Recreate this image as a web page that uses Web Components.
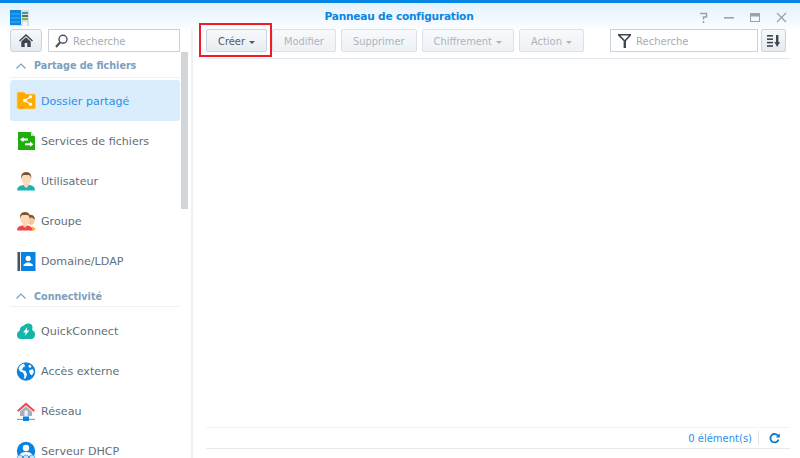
<!DOCTYPE html>
<html lang="fr">
<head>
<meta charset="utf-8">
<title>Panneau de configuration</title>
<style>
    html, body { margin: 0; height: 100%; overflow: hidden; background: #fff; }
    body { font-family: "DejaVu Sans", Verdana, sans-serif; }
</style>
</head>
<body>

<dsm-window>
    <dsm-titlebar slot="title">Panneau de configuration</dsm-titlebar>
    <dsm-sidebar slot="side">
        <nav-group>Partage de fichiers</nav-group>
        <nav-item icon="folder" active>Dossier partagé</nav-item>
        <nav-item icon="services">Services de fichiers</nav-item>
        <nav-item icon="user">Utilisateur</nav-item>
        <nav-item icon="group">Groupe</nav-item>
        <nav-item icon="domain">Domaine/LDAP</nav-item>
        <nav-group>Connectivité</nav-group>
        <nav-item icon="quick">QuickConnect</nav-item>
        <nav-item icon="globe">Accès externe</nav-item>
        <nav-item icon="network">Réseau</nav-item>
        <nav-item icon="dhcp">Serveur DHCP</nav-item>
    </dsm-sidebar>
    <dsm-main slot="main">
        <tool-button slot="tools" menu highlight>Créer</tool-button>
        <tool-button slot="tools" disabled>Modifier</tool-button>
        <tool-button slot="tools" disabled>Supprimer</tool-button>
        <tool-button slot="tools" menu disabled>Chiffrement</tool-button>
        <tool-button slot="tools" menu disabled>Action</tool-button>
        <span slot="status">0 élément(s)</span>
    </dsm-main>
</dsm-window>

<script>
const icons = {
    folder: `<path d="M1 3.5 Q1 2 2.5 2 H8 L10 4 H18 Q19.5 4 19.5 5.5 V17.5 Q19.5 19 18 19 H2.5 Q1 19 1 17.5 Z" fill="#ffab00" stroke="#ffd27a" stroke-width=".7"/>
        <path d="M14.5 6.8 L8.8 10.5 L14.5 14.2" fill="none" stroke="#fff" stroke-width="1.2"/>
        <circle cx="14.5" cy="6.8" r="1.6" fill="#fff"/><circle cx="8.8" cy="10.5" r="1.7" fill="#fff"/><circle cx="14.5" cy="14.2" r="1.6" fill="#fff"/>`,
    services: `<path d="M2 1 H14.5 L19 5.5 V19 H2 Z" fill="#21ad0d"/><path d="M15 1 L19 5 H15 Z" fill="#bfe8b5"/>
        <path d="M4 8.6 L7.5 6 V7.6 H12 V9.6 H7.5 V11.2 Z" fill="#fff"/><path d="M17.5 13.2 L14 10.6 V12.2 H9 V14.2 H14 V15.8 Z" fill="#fff"/>`,
    user: `<path d="M1 19.5 Q1 15 6.5 14.3 L8.5 13.5 H12.5 L14.5 14.3 Q19 15 19 19.5 Z" fill="#1ab3b3"/>
        <path d="M7.8 12 H12.6 V15 L10.2 17 L7.8 15 Z" fill="#fbd3ae"/>
        <ellipse cx="10.2" cy="7.5" rx="4.8" ry="6.2" fill="#fcd9b8"/>
        <path d="M5.2 8 Q4.4 1 10.2 1 Q16 1 15.2 8 Q14.6 4.2 12.3 4 H8.1 Q5.8 4.2 5.2 8 Z" fill="#7c5230"/>`,
    group: `<ellipse cx="15" cy="9.5" rx="3.6" ry="4.6" fill="#f6c79c"/>
        <path d="M11 9 Q11 3.5 15 3.8 Q19 4 18.8 9 Q17.5 6.5 15 6.5 Z" fill="#8a5a30"/>
        <path d="M14 19.5 L16.5 15.5 L19.5 17.5 L18.5 19.5 Z" fill="#ffb02e"/>
        <path d="M1 19.5 Q1 15.5 5.5 14.8 L7.5 14 H10.5 L12.5 14.8 Q16.5 15.5 16.5 19.5 Z" fill="#f0454d"/>
        <path d="M7 12 H11 V15 L9 16.5 L7 15 Z" fill="#fbd3ae"/>
        <ellipse cx="9" cy="7.5" rx="4.8" ry="6.2" fill="#fcd9b8"/>
        <path d="M4 8 Q3.2 1 9 1 Q14.8 1 14 8 Q13.4 4.2 11 4 H7 Q4.6 4.2 4 8 Z" fill="#7c5230"/>`,
    domain: `<rect x="1.5" y="1" width="2.6" height="19" fill="#47535f"/><rect x="5" y="1" width="14.5" height="19" fill="#0a82e0"/>
        <circle cx="12.2" cy="7.4" r="2.6" fill="#fff"/><path d="M7.6 15 V13.4 L10.8 11.6 H13.6 L16.8 13.4 V15 Z" fill="#fff"/>`,
    quick: `<path d="M5 18 Q1 18 1 14 Q1 10.8 3.6 10 Q3.6 5.5 8 4.5 Q9.5 2 13 2.5 Q16.5 3.2 16.5 6.5 Q16.5 8.2 16 9 Q19 10 19 13.5 Q19 18 14.5 18 Z" fill="#12b5a6"/>
        <path d="M11.5 6 L7 11.5 H9.8 L8.6 15 L13.4 9.6 H10.6 Z" fill="#fff"/>`,
    globe: `<circle cx="10" cy="10.5" r="9.2" fill="#0a82e0"/>
        <path d="M8 2.5 Q4 3.5 2.5 7.5 L4 10.5 L7 11.5 L8.5 15 L7.5 17.5 L9.5 17.5 L11 13.5 L9.5 10 L6 9 L7 6.5 L9 5.5 Z" fill="#fff"/>
        <path d="M13 3.5 L15.5 5 L14.5 7 L12.5 6 Z M13 9.5 L16.5 8 L18 10.5 L16 14.5 L14 13 Z" fill="#fff"/>`,
    network: `<path d="M10 1.5 L1 9.5 L2.5 10.8 L10 4.2 L17.5 10.8 L19 9.5 Z" fill="#f0484a"/>
        <path d="M4 10.5 L10 5.2 L16 10.5 V15 H4 Z" fill="#a6b0ba"/>
        <rect x="8.5" y="9.5" width="3.2" height="5.5" fill="#eef1f4"/>
        <rect x="1" y="17.8" width="18" height="1.2" fill="#8fa2b3"/><rect x="7" y="15.5" width="6" height="4.5" fill="#0a82e0"/>`,
    dhcp: `<circle cx="10" cy="10" r="9.2" fill="#0a82e0"/>
        <circle cx="10" cy="7" r="3.2" fill="#fff"/><path d="M3 15 Q4.5 11 10 11 Q15.5 11 17 15 Z" fill="#fff"/>
        <g fill="#cfe6fa" stroke="#0a82e0" stroke-width=".6"><circle cx="4" cy="16.5" r="2.6"/><circle cx="10" cy="16.5" r="2.6"/><circle cx="16" cy="16.5" r="2.6"/></g>`,
};

class DsmWindow extends HTMLElement {
    constructor() {
        super();
        this.attachShadow({mode: "open"});
        this.shadowRoot.innerHTML = `
        <style>
            :host {
                display: flex;
                flex-direction: column;
                width: 800px;
                height: 458px;
                overflow: hidden;
                background: #fff;
                border-top: 3px solid #0586e6;
                box-sizing: border-box;
            }
            .body { flex: 1; display: flex; min-height: 0; }
        </style>
        <slot name="title"></slot>
        <div class="body">
            <slot name="side"></slot>
            <slot name="main"></slot>
        </div>`;
    }
}
customElements.define("dsm-window", DsmWindow);

class DsmTitlebar extends HTMLElement {
    constructor() {
        super();
        this.attachShadow({mode: "open"});
        this.shadowRoot.innerHTML = `
        <style>
            :host {
                display: grid;
                grid-template-columns: 1fr auto 1fr;
                align-items: center;
                height: 26px;
                flex: none;
                padding: 0 13px 0 10px;
                background: linear-gradient(#e3f1fd, #fbfdff);
            }
            .logo { width: 19px; height: 16px; margin-top: 4px; display: block; }
            .title {
                font-size: 10.6px;
                font-weight: bold;
                color: #0a86e3;
                letter-spacing: -.02em;
                margin-left: 1px;
            }
            .ctl { display: flex; gap: 15px; justify-content: flex-end; align-items: center; margin-top: 3px; }
            svg.c { width: 11px; height: 11px; display: block; }
        </style>
        <svg class="logo" viewBox="0 0 19 16">
            <rect x="0" y="0" width="19" height="16" fill="#d8dee4"/>
            <rect x="0" y="0" width="11" height="15" fill="#0a86e3"/>
            <path d="M1 4H10M1 8H10M1 12H10" stroke="#5cb8f5" stroke-width=".8"/>
            <rect x="12" y="2" width="6" height="2" fill="#3f9e8f"/>
            <rect x="12" y="5" width="6" height="2" fill="#606a74"/>
            <rect x="12" y="8" width="6" height="2" fill="#6fbf4a"/>
            <rect x="13" y="12" width="4" height="4" fill="#f4f7fa"/>
        </svg>
        <div class="title"><slot></slot></div>
        <div class="ctl">
            <svg class="c" viewBox="0 0 11 11" fill="none" stroke="#9aa3ac" stroke-width="1.5"><path d="M2 1.5 H8.5 V5 H5.5 V7.5"/><path d="M5.5 9 V11"/></svg>
            <svg class="c" viewBox="0 0 11 11"><rect x="0" y="5" width="10" height="1.6" fill="#9aa3ac"/></svg>
            <svg class="c" viewBox="0 0 11 11" fill="none" stroke="#9aa3ac"><rect x=".5" y="1.5" width="9" height="8"/><rect x="1" y="2" width="8" height="2" fill="#9aa3ac"/></svg>
            <svg class="c" viewBox="0 0 11 11" fill="none" stroke="#9aa3ac" stroke-width="1.3"><path d="M1 1 L10 10 M10 1 L1 10"/></svg>
        </div>`;
    }
}
customElements.define("dsm-titlebar", DsmTitlebar);

class DsmSidebar extends HTMLElement {
    constructor() {
        super();
        this.attachShadow({mode: "open"});
        this.shadowRoot.innerHTML = `
        <style>
            :host {
                display: flex;
                flex-direction: column;
                width: 193px;
                flex: none;
                box-sizing: border-box;
                border-right: 2px solid #eef1f4;
                min-height: 0;
                position: relative;
            }
            .search { display: flex; gap: 6px; padding: 0 11px 0 10px; flex: none; }
            .home {
                width: 32px; height: 23px; box-sizing: border-box; flex: none;
                display: flex; align-items: center; justify-content: center;
                border: 1px solid #c8d4e0; border-radius: 3px;
                background: linear-gradient(#f7f9fb, #e6ebf0);
            }
            .box {
                flex: 1; height: 23px; box-sizing: border-box;
                display: flex; align-items: center; gap: 5px; padding-left: 6px;
                border: 1px solid #c9d3dd; background: #fff;
                font-size: 10px; color: #a5adb6;
            }
            .box span { padding-top: 2px; }
            .list {
                flex: 1; min-height: 0; overflow: hidden;
                padding: 0 11px 0 10px;
            }
            /* scrollbar thumb lies over the list */
            .thumb { position: absolute; left: 181px; top: 23px; width: 7px; height: 157px; background: #d3d6d9; }
        </style>
        <div class="search">
            <div class="home">
                <svg width="14" height="13" viewBox="0 0 14 13"><path d="M7 0 L0 6.5 L1 7.5 L7 2 L13 7.5 L14 6.5 Z" fill="#3e4650"/><path d="M2.3 7.5 L7 3.3 L11.7 7.5 V13 H8.3 V9 H5.7 V13 H2.3 Z" fill="#3e4650"/></svg>
            </div>
            <div class="box">
                <svg width="13" height="14" viewBox="0 0 13 14" fill="none" stroke="#4a525b"><circle cx="8" cy="5.2" r="4" stroke-width="1.4"/><path d="M5 8.5 L1 13" stroke-width="2.2"/></svg>
                <span>Recherche</span>
            </div>
        </div>
        <div class="list"><slot></slot></div>
        <div class="thumb"></div>`;
    }
}
customElements.define("dsm-sidebar", DsmSidebar);

class NavGroup extends HTMLElement {
    constructor() {
        super();
        this.attachShadow({mode: "open"});
        this.shadowRoot.innerHTML = `
        <style>
            :host {
                display: flex;
                align-items: center;
                gap: 8px;
                height: 26px;
                box-sizing: border-box;
                padding: 2px 0 0 6px;
                border-bottom: 1px solid #eef3f8;
                font-size: 9.6px;
                font-weight: bold;
                color: #7d9ebd;
            }
            :host(:not(:first-child)) { padding-top: 5px; margin-bottom: 4px; }
        </style>
        <svg width="10" height="6" viewBox="0 0 10 6" fill="none" stroke="#7d9ebd" stroke-width="1.2"><path d="M.5 5.5 L5 1 L9.5 5.5"/></svg>
        <span><slot></slot></span>`;
    }
}
customElements.define("nav-group", NavGroup);

class NavItem extends HTMLElement {
    constructor() {
        super();
        this.attachShadow({mode: "open"});
        this.shadowRoot.innerHTML = `
        <style>
            :host {
                display: flex;
                align-items: center;
                gap: 4px;
                height: 40px;
                box-sizing: border-box;
                padding: 1px 0 0 6px;
                font-size: 11.1px;
                color: #626e7a;
                border-radius: 3px;
            }
            :host([active]) { background: #d9edfd; color: #2d8fe6; height: 41px; margin-top: 2px; }
            svg { width: 21px; height: 21px; flex: none; }
            :host([active]) svg { margin-top: -1px; }
            span { white-space: nowrap; }
        </style>
        <svg viewBox="0 0 21 21"></svg>
        <span><slot></slot></span>`;
    }

    connectedCallback() {
        this.render();
    }

    render() {
        const name = this.getAttribute("icon");
        this.shadowRoot.querySelector("svg").innerHTML = icons[name] || "";
    }
}
customElements.define("nav-item", NavItem);

class ToolButton extends HTMLElement {
    constructor() {
        super();
        this.attachShadow({mode: "open"});
        this.shadowRoot.innerHTML = `
        <style>
            :host {
                display: flex;
                align-items: center;
                gap: 4px;
                height: 23px;
                box-sizing: border-box;
                padding: 2px 11px 0;
                border: 1px solid #c8d4e0;
                border-radius: 2px;
                background: linear-gradient(#f7f9fb, #e8edf2);
                font-size: 9.9px;
                color: #515b66;
                position: relative;
            }
            :host([disabled]) { color: #adb5bd; border-color: #dbe2e9; background: linear-gradient(#f7f9fb, #eff2f5); }
            i { display: none; width: 0; height: 0; margin-top: 1px; border: 3px solid transparent; border-top-color: currentColor; border-bottom: 0; }
            :host([menu]) i { display: block; }
            /* red callout drawn over the screenshot */
            .mark { display: none; position: absolute; left: -8px; top: -7px; right: -6px; bottom: -6px; border: 2px solid #ee1c25; }
            :host([highlight]) .mark { display: block; }
        </style>
        <span><slot></slot></span><i></i><div class="mark"></div>`;
    }
}
customElements.define("tool-button", ToolButton);

class DsmMain extends HTMLElement {
    constructor() {
        super();
        this.attachShadow({mode: "open"});
        this.shadowRoot.innerHTML = `
        <style>
            :host {
                flex: 1;
                display: flex;
                flex-direction: column;
                min-width: 0;
                padding: 0 10px 0 13px;
            }
            .bar {
                display: flex; align-items: flex-start; gap: 5px;
                height: 30px; flex: none; box-sizing: border-box;
                border-bottom: 1px solid #e3e9ef;
            }
            .right { margin-left: auto; margin-right: 4px; display: flex; gap: 3px; }
            .filter {
                width: 148px; height: 23px; box-sizing: border-box;
                display: flex; align-items: center; gap: 5px; padding-left: 7px;
                border: 1px solid #c9d3dd; background: #fff;
                font-size: 10px; color: #a5adb6;
            }
            .filter span { padding-top: 2px; }
            .sort {
                width: 25px; height: 23px; box-sizing: border-box;
                display: flex; align-items: center; justify-content: center;
                border: 1px solid #c8d4e0; border-radius: 2px;
                background: linear-gradient(#f7f9fb, #e6ebf0);
            }
            .grid { flex: 1; }
            .foot {
                height: 22px; flex: none; box-sizing: border-box; margin-bottom: 9px;
                display: flex; align-items: center; justify-content: flex-end;
                border-top: 1px solid #f1f3f5; border-bottom: 1px solid #e3e9ef;
                font-size: 10px; color: #2d8fe6; padding-right: 10px;
            }
            .sep { width: 1px; height: 14px; background: #dfe5ea; margin: 0 10px 0 6px; }
        </style>
        <div class="bar">
            <slot name="tools"></slot>
            <div class="right">
                <div class="filter">
                    <svg width="13" height="14" viewBox="0 0 13 14"><path d="M0 0 H13 V1.6 L8 7 V14 H5.6 V7 L0 1.6 Z M2.4 1.6 L6.8 6 L10.8 1.6 Z" fill="#3e4650" fill-rule="evenodd"/></svg>
                    <span>Recherche</span>
                </div>
                <div class="sort">
                    <svg width="14" height="12" viewBox="0 0 14 12" fill="#3e4650"><rect x="0" y="0" width="6" height="1.6"/><rect x="0" y="3.4" width="6" height="1.6"/><rect x="0" y="6.8" width="6" height="1.6"/><rect x="0" y="10.2" width="6" height="1.6"/><rect x="9" y="0" width="2.4" height="8"/><path d="M7.4 7 H13 L10.2 12 Z"/></svg>
                </div>
            </div>
        </div>
        <div class="grid"></div>
        <div class="foot">
            <slot name="status"></slot>
            <div class="sep"></div>
            <svg width="11" height="11" viewBox="0 0 11 11" fill="none"><path d="M9.3 3.2 A4.2 4.2 0 1 0 9.6 6.5" stroke="#0a78c8" stroke-width="1.8"/><path d="M10.8 0.6 V4.6 H6.8 Z" fill="#0a78c8"/></svg>
        </div>`;
    }
}
customElements.define("dsm-main", DsmMain);
</script>
</body>
</html>
